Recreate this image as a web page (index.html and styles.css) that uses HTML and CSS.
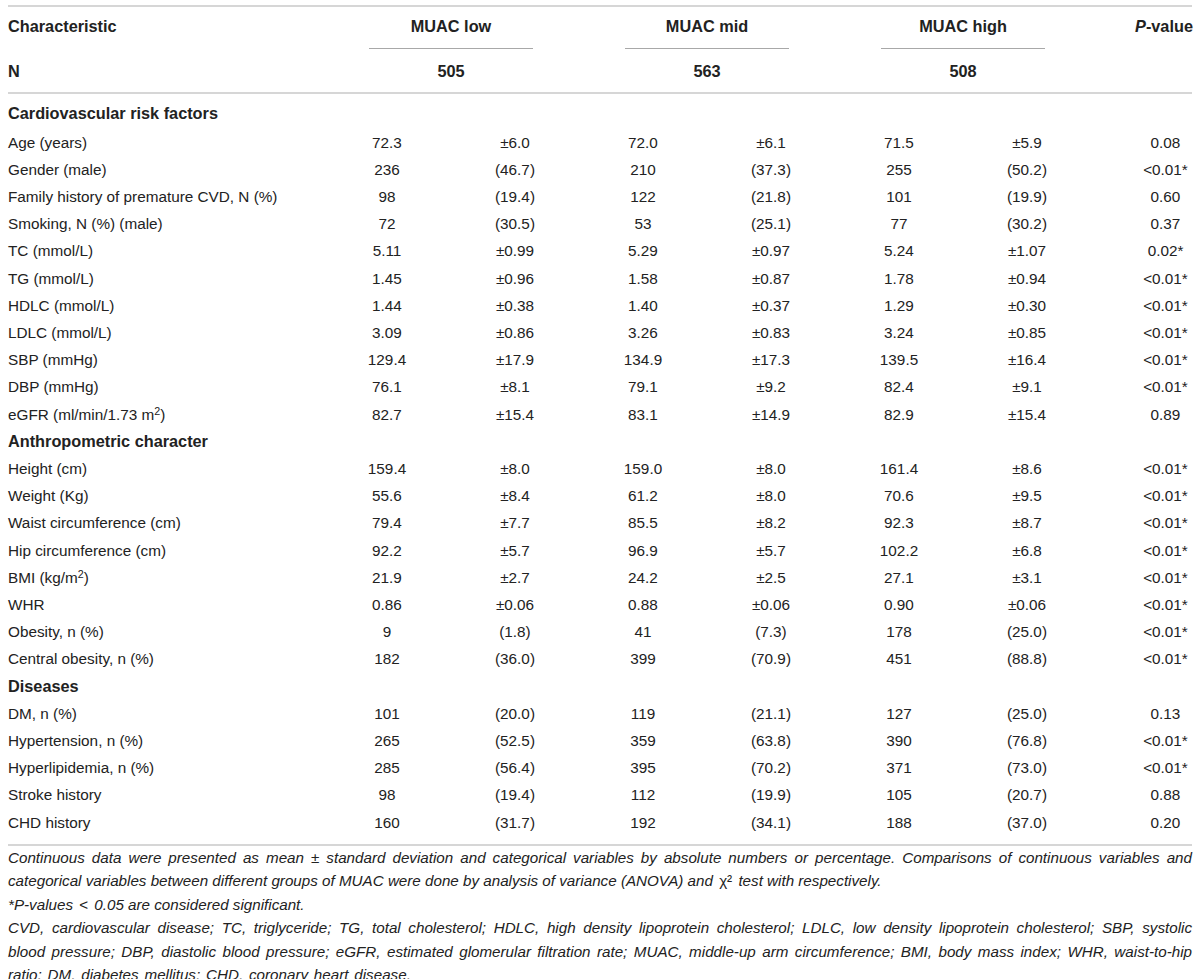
FILE: index.html
```html
<!DOCTYPE html>
<html lang="en">
<head>
  <meta charset="UTF-8">
  <meta name="viewport" content="width=device-width, initial-scale=1.0">
  <title>MUAC characteristics</title>
  <link rel="stylesheet" href="styles.css">
</head>
<body>
  <table class="summary">
    <colgroup>
      <col class="col-label">
      <col class="col-num"><col class="col-num">
      <col class="col-num"><col class="col-num">
      <col class="col-num"><col class="col-num">
      <col class="col-p">
    </colgroup>
    <thead>
      <tr class="head-groups">
        <th class="label">Characteristic</th>
        <th class="group" colspan="2"><span>MUAC low</span></th>
        <th class="group" colspan="2"><span>MUAC mid</span></th>
        <th class="group" colspan="2"><span>MUAC high</span></th>
        <th class="pval"><i>P</i>-value</th>
      </tr>
      <tr class="head-n">
        <th class="label">N</th>
        <th colspan="2">505</th>
        <th colspan="2">563</th>
        <th colspan="2">508</th>
        <th class="pval"></th>
      </tr>
    </thead>
    <tbody>
      <tr class="section first"><td colspan="8">Cardiovascular risk factors</td></tr>
      <tr><td>Age (years)</td><td>72.3</td><td>±6.0</td><td>72.0</td><td>±6.1</td><td>71.5</td><td>±5.9</td><td class="pval">0.08</td></tr>
      <tr><td>Gender (male)</td><td>236</td><td>(46.7)</td><td>210</td><td>(37.3)</td><td>255</td><td>(50.2)</td><td class="pval">&lt;0.01*</td></tr>
      <tr><td>Family history of premature CVD, N (%)</td><td>98</td><td>(19.4)</td><td>122</td><td>(21.8)</td><td>101</td><td>(19.9)</td><td class="pval">0.60</td></tr>
      <tr><td>Smoking, N (%) (male)</td><td>72</td><td>(30.5)</td><td>53</td><td>(25.1)</td><td>77</td><td>(30.2)</td><td class="pval">0.37</td></tr>
      <tr><td>TC (mmol/L)</td><td>5.11</td><td>±0.99</td><td>5.29</td><td>±0.97</td><td>5.24</td><td>±1.07</td><td class="pval">0.02*</td></tr>
      <tr><td>TG (mmol/L)</td><td>1.45</td><td>±0.96</td><td>1.58</td><td>±0.87</td><td>1.78</td><td>±0.94</td><td class="pval">&lt;0.01*</td></tr>
      <tr><td>HDLC (mmol/L)</td><td>1.44</td><td>±0.38</td><td>1.40</td><td>±0.37</td><td>1.29</td><td>±0.30</td><td class="pval">&lt;0.01*</td></tr>
      <tr><td>LDLC (mmol/L)</td><td>3.09</td><td>±0.86</td><td>3.26</td><td>±0.83</td><td>3.24</td><td>±0.85</td><td class="pval">&lt;0.01*</td></tr>
      <tr><td>SBP (mmHg)</td><td>129.4</td><td>±17.9</td><td>134.9</td><td>±17.3</td><td>139.5</td><td>±16.4</td><td class="pval">&lt;0.01*</td></tr>
      <tr><td>DBP (mmHg)</td><td>76.1</td><td>±8.1</td><td>79.1</td><td>±9.2</td><td>82.4</td><td>±9.1</td><td class="pval">&lt;0.01*</td></tr>
      <tr><td>eGFR (ml/min/1.73 m<sup>2</sup>)</td><td>82.7</td><td>±15.4</td><td>83.1</td><td>±14.9</td><td>82.9</td><td>±15.4</td><td class="pval">0.89</td></tr>
      <tr class="section"><td colspan="8">Anthropometric character</td></tr>
      <tr><td>Height (cm)</td><td>159.4</td><td>±8.0</td><td>159.0</td><td>±8.0</td><td>161.4</td><td>±8.6</td><td class="pval">&lt;0.01*</td></tr>
      <tr><td>Weight (Kg)</td><td>55.6</td><td>±8.4</td><td>61.2</td><td>±8.0</td><td>70.6</td><td>±9.5</td><td class="pval">&lt;0.01*</td></tr>
      <tr><td>Waist circumference (cm)</td><td>79.4</td><td>±7.7</td><td>85.5</td><td>±8.2</td><td>92.3</td><td>±8.7</td><td class="pval">&lt;0.01*</td></tr>
      <tr><td>Hip circumference (cm)</td><td>92.2</td><td>±5.7</td><td>96.9</td><td>±5.7</td><td>102.2</td><td>±6.8</td><td class="pval">&lt;0.01*</td></tr>
      <tr><td>BMI (kg/m<sup>2</sup>)</td><td>21.9</td><td>±2.7</td><td>24.2</td><td>±2.5</td><td>27.1</td><td>±3.1</td><td class="pval">&lt;0.01*</td></tr>
      <tr><td>WHR</td><td>0.86</td><td>±0.06</td><td>0.88</td><td>±0.06</td><td>0.90</td><td>±0.06</td><td class="pval">&lt;0.01*</td></tr>
      <tr><td>Obesity, n (%)</td><td>9</td><td>(1.8)</td><td>41</td><td>(7.3)</td><td>178</td><td>(25.0)</td><td class="pval">&lt;0.01*</td></tr>
      <tr><td>Central obesity, n (%)</td><td>182</td><td>(36.0)</td><td>399</td><td>(70.9)</td><td>451</td><td>(88.8)</td><td class="pval">&lt;0.01*</td></tr>
      <tr class="section"><td colspan="8">Diseases</td></tr>
      <tr><td>DM, n (%)</td><td>101</td><td>(20.0)</td><td>119</td><td>(21.1)</td><td>127</td><td>(25.0)</td><td class="pval">0.13</td></tr>
      <tr><td>Hypertension, n (%)</td><td>265</td><td>(52.5)</td><td>359</td><td>(63.8)</td><td>390</td><td>(76.8)</td><td class="pval">&lt;0.01*</td></tr>
      <tr><td>Hyperlipidemia, n (%)</td><td>285</td><td>(56.4)</td><td>395</td><td>(70.2)</td><td>371</td><td>(73.0)</td><td class="pval">&lt;0.01*</td></tr>
      <tr><td>Stroke history</td><td>98</td><td>(19.4)</td><td>112</td><td>(19.9)</td><td>105</td><td>(20.7)</td><td class="pval">0.88</td></tr>
      <tr class="last"><td>CHD history</td><td>160</td><td>(31.7)</td><td>192</td><td>(34.1)</td><td>188</td><td>(37.0)</td><td class="pval">0.20</td></tr>
    </tbody>
  </table>

  <div class="notes">
    <p>Continuous data were presented as mean ± standard deviation and categorical variables by absolute numbers or percentage. Comparisons of continuous variables and categorical variables between different groups of MUAC were done by analysis of variance (ANOVA) and <span class="chi">χ²</span> test with respectively.</p>
    <p>*P-values <span class="lt">&lt;</span> 0.05 are considered significant.</p>
    <p class="abbr">CVD, cardiovascular disease; TC, triglyceride; TG, total cholesterol; HDLC, high density lipoprotein cholesterol; LDLC, low density lipoprotein cholesterol; SBP, systolic blood pressure; DBP, diastolic blood pressure; eGFR, estimated glomerular filtration rate; MUAC, middle-up arm circumference; BMI, body mass index; WHR, waist-to-hip ratio; DM, diabetes mellitus; CHD, coronary heart disease.</p>
  </div>
</body>
</html>
```

FILE: styles.css
```css
body {
  margin: 0;
  padding: 5px 8px 0;
  font-family: "Liberation Sans", Arial, sans-serif;
  color: #222;
  background-color: #fff;
}
.summary {
  width: 1184px;
  table-layout: fixed;
  border-collapse: collapse;
  border-top: 2px solid #d6d6d6;
  border-bottom: 2px solid #d6d6d6;
  font-size: 15.3px;
  line-height: 19.2px;
}
.col-label {
  width: 315px;
}
.col-num {
  width: 128px;
}
.col-p {
  width: 101px;
}
th {
  font-size: 16.3px;
  font-weight: bold;
  text-align: center;
  vertical-align: top;
  white-space: nowrap;
  padding: 10px 0 12px;
}
th.label {
  text-align: left;
}
.head-groups th.group {
  padding: 0 46px;
}
.head-groups th.group span {
  display: block;
  padding: 10px 0 12px;
  border-bottom: 1px solid #a8a8a8;
}
.head-n th {
  padding: 13px 0 10.6px;
  border-bottom: 2px solid #d6d6d6;
}
th.pval {
  padding-left: 44px;
}
td.pval {
  padding-left: 48px;
}
td {
  padding: 4px 0;
  text-align: center;
  white-space: nowrap;
}
td:first-child {
  text-align: left;
}
.section td {
  font-size: 16.3px;
  font-weight: bold;
}
.section.first td {
  padding: 10px 0 5.4px;
}
.last td {
  padding-bottom: 12px;
}
sup {
  font-size: 0.7em;
  line-height: 0;
  vertical-align: 0.5em;
}
.notes {
  font-size: 15.2px;
  font-style: italic;
  line-height: 23.5px;
  text-align: justify;
}
.notes p {
  margin: 0;
}
.notes .abbr {
  word-spacing: 1.6px;
}
.lt {
  font-style: normal;
  margin: 0 2px;
}
.chi {
  font-style: normal;
  white-space: nowrap;
  margin: 0 2px;
}
```
